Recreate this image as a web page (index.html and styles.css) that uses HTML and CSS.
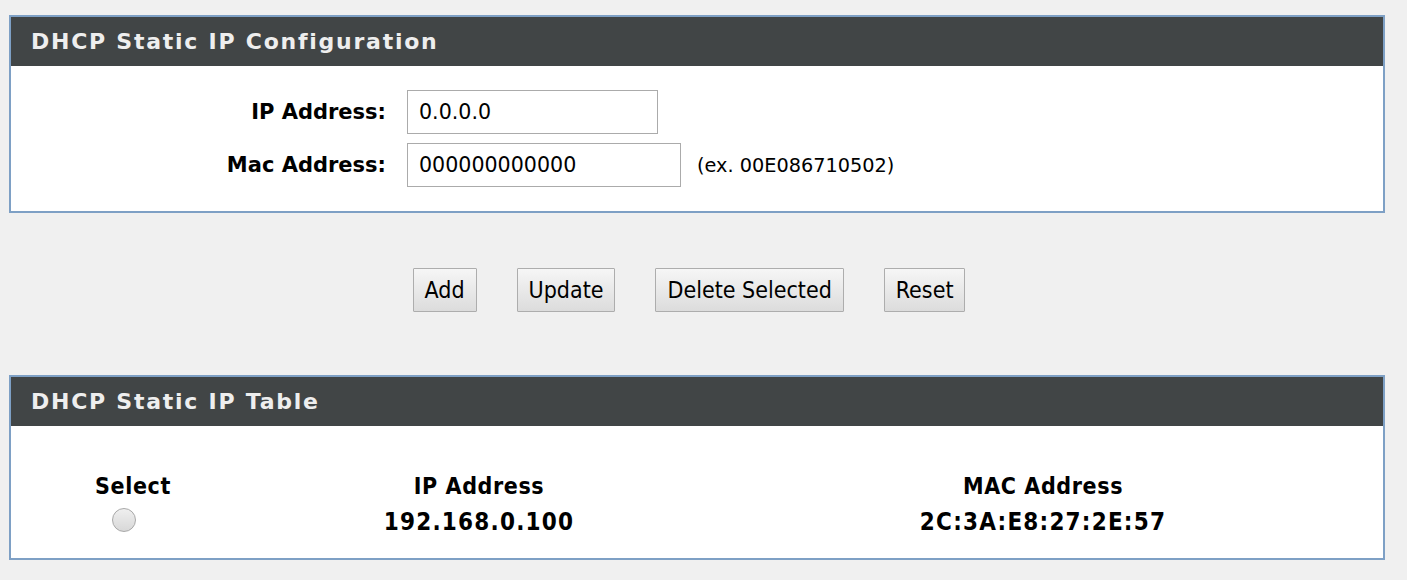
FILE: index.html
```html
<!DOCTYPE html>
<html>
<head>
<meta charset="utf-8">
<link rel="stylesheet" href="styles.css">
</head>
<body>
<div class="page">
  <section class="panel panel-config">
    <div class="panel-head">DHCP Static IP Configuration</div>
    <div class="form">
      <label class="form-label">IP Address:</label>
      <div class="form-field"><input class="text-input ip-input" type="text" value="0.0.0.0"></div>
      <span></span>
      <label class="form-label">Mac Address:</label>
      <div class="form-field"><input class="text-input mac-input" type="text" value="000000000000"></div>
      <span class="hint">(ex. 00E086710502)</span>
    </div>
  </section>

  <div class="actions">
    <button class="btn">Add</button>
    <button class="btn">Update</button>
    <button class="btn">Delete Selected</button>
    <button class="btn">Reset</button>
  </div>

  <section class="panel panel-table">
    <div class="panel-head">DHCP Static IP Table</div>
    <div class="table">
      <div class="cell th">Select</div>
      <div class="cell th">IP Address</div>
      <div class="cell th">MAC Address</div>
      <div class="cell td"><span class="radio"></span></div>
      <div class="cell td">192.168.0.100</div>
      <div class="cell td">2C:3A:E8:27:2E:57</div>
    </div>
  </section>
</div>
</body>
</html>
```

FILE: styles.css
```css
html, body {
  margin: 0;
  padding: 0;
  background: #f0f0f0;
}

.page {
  padding: 15px 22px 0 9px;
  display: flex;
  flex-direction: column;
  font-family: "DejaVu Sans", Verdana, sans-serif;
  color: #000;
}

.panel {
  border: 2px solid #7ea0c5;
  background: #ffffff;
}

.panel-head {
  height: 49px;
  background: #414546;
  color: #eeeeee;
  font-family: "DejaVu Sans", Verdana, sans-serif;
  font-weight: bold;
  font-size: 22px;
  letter-spacing: 1.75px;
  display: flex;
  align-items: center;
  padding-left: 20px;
}

.form {
  display: grid;
  grid-template-columns: 375px auto 1fr;
  column-gap: 21px;
  row-gap: 9px;
  padding: 24px 0 24px 0;
  align-items: center;
}

.form-label {
  text-align: right;
  font-weight: bold;
  font-size: 21px;
}

.text-input {
  box-sizing: border-box;
  height: 44px;
  border: 1px solid #ababab;
  padding: 0 11px;
  font-family: "DejaVu Sans", Verdana, sans-serif;
  font-size: 20.6px;
  color: #000;
  background: #fff;
  outline: none;
  display: block;
}

.ip-input { width: 251px; }
.mac-input { width: 274px; }

.hint {
  font-size: 19.3px;
  margin-left: -5px;
}

.actions {
  display: flex;
  justify-content: center;
  gap: 40px;
  margin: 55px 0 63px 0;
  padding-right: 16px;
}

.btn {
  box-sizing: border-box;
  height: 44px;
  padding: 0 11px;
  border: 1px solid #adadad;
  border-radius: 1px;
  background: linear-gradient(#f6f6f6, #dcdcdc);
  font-family: "DejaVu Sans Condensed", "DejaVu Sans", sans-serif;
  font-size: 23px;
  color: #000;
}

.table {
  display: grid;
  grid-template-columns: 244px 448px 1fr;
  grid-auto-rows: 36px;
  padding: 42px 0 18px 0;
}

.cell {
  display: flex;
  align-items: center;
  justify-content: center;
  font-family: "DejaVu Sans Condensed", "DejaVu Sans", sans-serif;
  font-weight: bold;
}

.th {
  font-size: 23px;
  letter-spacing: 0.6px;
}

.td {
  font-size: 24px;
  letter-spacing: 1.2px;
}

.radio {
  box-sizing: border-box;
  width: 24px;
  height: 24px;
  border-radius: 50%;
  border: 1px solid #a8a8a8;
  background: linear-gradient(#efefef, #d8d8d8);
  margin-left: -18px;
  margin-top: -4px;
}
```
